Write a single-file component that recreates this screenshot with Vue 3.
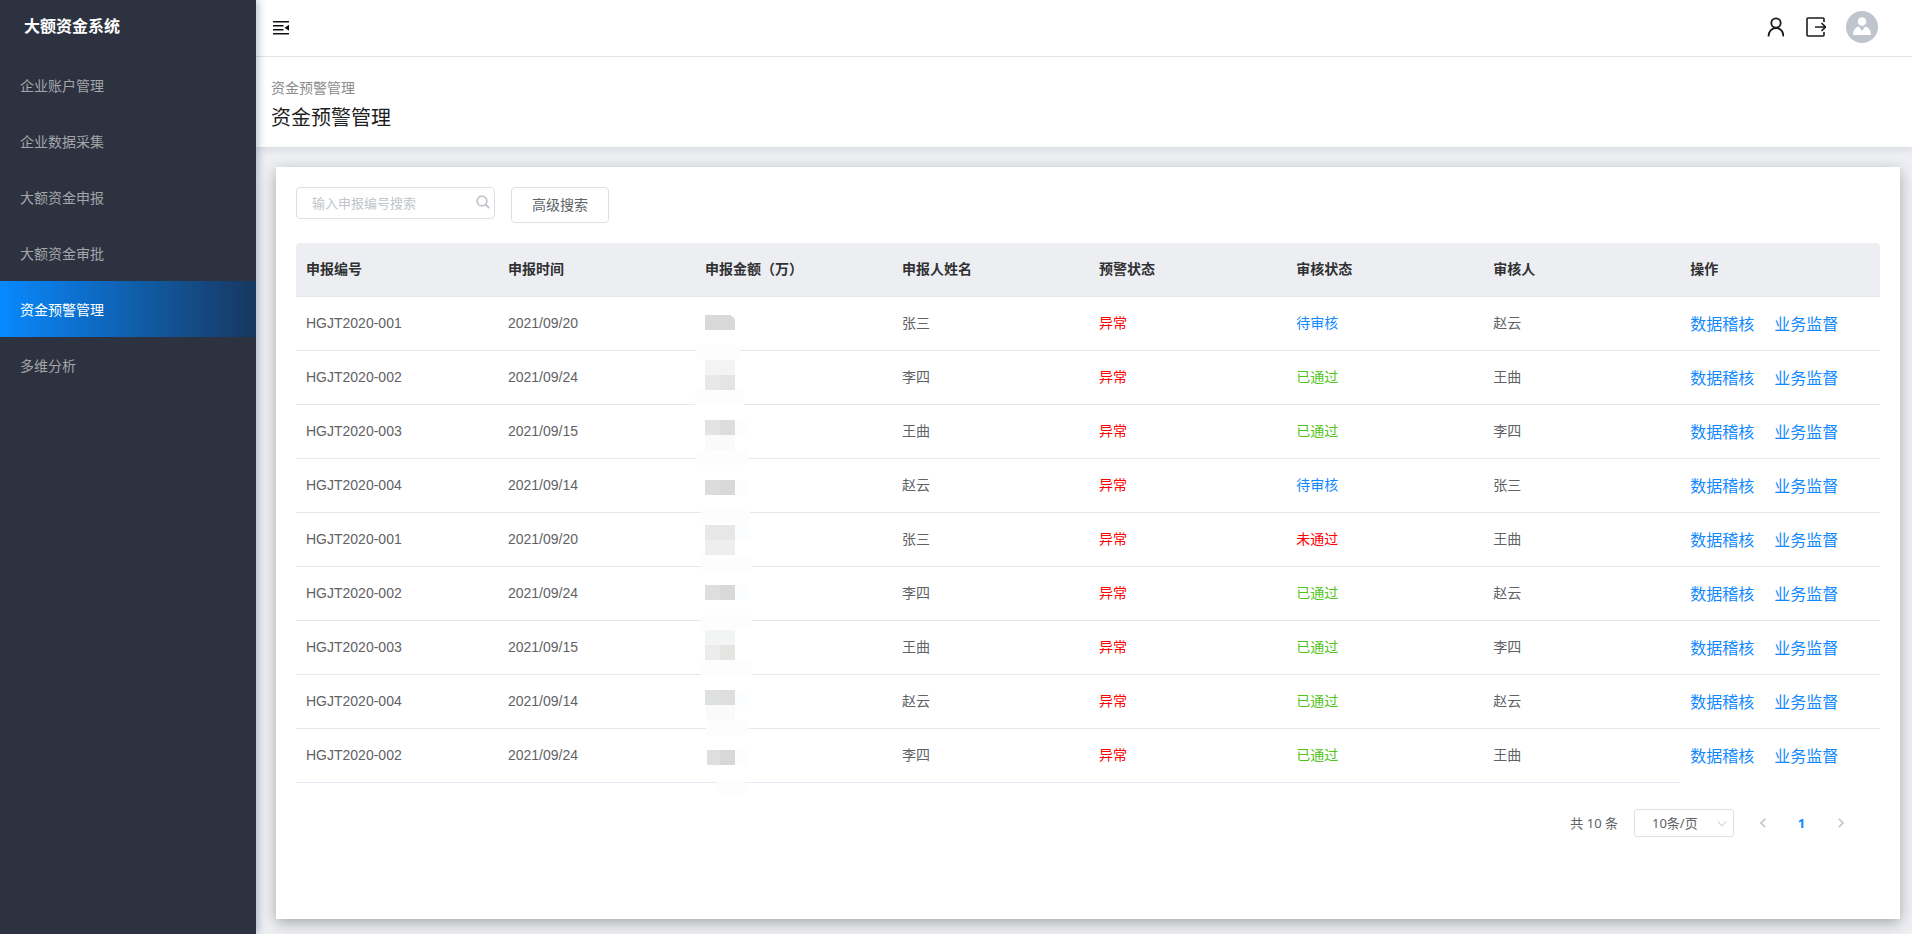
<script setup>
import { ref } from 'vue'

const menu = ['企业账户管理', '企业数据采集', '大额资金申报', '大额资金审批', '资金预警管理', '多维分析']
const active = ref(4)
const keyword = ref('')
const pageSize = ref('10条/页')

const columns = ['申报编号', '申报时间', '申报金额（万）', '申报人姓名', '预警状态', '审核状态', '审核人', '操作']

// mask: mosaic tiles that hide the amount, [x, y, width, height, fill, radius] inside the cell
const rows = [
  { id: 'HGJT2020-001', date: '2021/09/20', name: '张三', state: '待审核', auditor: '赵云',
    mask: [[10, 18, 26, 15, '#d9d9d9'], [36, 19, 1, 14, '#d9d9d9'], [37, 20, 2, 13, '#d9d9d9'], [39, 22, 1, 11, '#d9d9d9'], [1, 48, 44, 15, '#fdfdfd']] },
  { id: 'HGJT2020-002', date: '2021/09/24', name: '李四', state: '已通过', auditor: '王曲',
    mask: [[10, 9, 30, 15, '#f3f3f3'], [10, 24, 15, 15, '#e8e8e8'], [25, 24, 15, 15, '#e4e4e4'], [0, 39, 49, 15, '#fdfdfd']] },
  { id: 'HGJT2020-003', date: '2021/09/15', name: '王曲', state: '已通过', auditor: '李四',
    mask: [[10, 15, 15, 15, '#e3e3e3'], [25, 15, 15, 15, '#dddddd'], [40, 15, 11, 15, '#fbfdff'], [10, 30, 30, 15, '#fafafa'], [1, 45, 52, 15, '#fdfdfd']] },
  { id: 'HGJT2020-004', date: '2021/09/14', name: '赵云', state: '待审核', auditor: '张三',
    mask: [[10, 21, 15, 15, '#dcdcdc'], [25, 21, 15, 15, '#d8d8d8'], [40, 21, 13, 15, '#fbfdff'], [6, 51, 49, 14, '#fdfdfd']] },
  { id: 'HGJT2020-001', date: '2021/09/20', name: '张三', state: '未通过', auditor: '王曲',
    mask: [[10, 12, 30, 15, '#e7e7e7'], [40, 12, 15, 15, '#fbfdff'], [10, 27, 30, 15, '#eeeeee'], [6, 42, 51, 15, '#fdfdfd']] },
  { id: 'HGJT2020-002', date: '2021/09/24', name: '李四', state: '已通过', auditor: '赵云',
    mask: [[10, 18, 15, 15, '#dedede'], [25, 18, 15, 15, '#d8d8d8'], [40, 18, 15, 15, '#fbfdff'], [6, 48, 51, 15, '#fdfdfd']] },
  { id: 'HGJT2020-003', date: '2021/09/15', name: '王曲', state: '已通过', auditor: '李四',
    mask: [[10, 9, 30, 15, '#f3f4f4'], [10, 24, 15, 15, '#ececec'], [25, 24, 15, 15, '#e5e5e3'], [6, 39, 51, 15, '#fdfdfd']] },
  { id: 'HGJT2020-004', date: '2021/09/14', name: '赵云', state: '已通过', auditor: '赵云',
    mask: [[10, 15, 15, 15, '#dfe1e1'], [25, 15, 15, 15, '#dedede'], [40, 15, 15, 15, '#fbfdff'], [11, 30, 29, 15, '#fafafa'], [11, 45, 43, 15, '#fdfdfd']] },
  { id: 'HGJT2020-002', date: '2021/09/24', name: '李四', state: '已通过', auditor: '王曲',
    mask: [[12, 21, 13, 15, '#dedede'], [25, 21, 15, 15, '#d8d8d8'], [40, 21, 13, 15, '#fbfdff'], [20, 51, 31, 14, '#fdfdfd', 6]] },
]

const stateClass = { 待审核: 'pending', 已通过: 'passed', 未通过: 'failed' }
</script>

<template>
  <div class="layout">
    <aside class="sidebar">
      <div class="logo">大额资金系统</div>
      <nav>
        <a
          v-for="(item, i) in menu"
          :key="item"
          href="#"
          class="menu-item"
          :class="{ active: i === active }"
          @click.prevent="active = i"
        >{{ item }}</a>
      </nav>
    </aside>

    <div class="main">
      <header class="topbar">
        <button class="icon-btn" type="button" aria-label="收起菜单">
          <svg width="16" height="16" viewBox="0 0 16 16">
            <path d="M0 2.700h16M0 6.700h10.500M0 10.700h10.500M0 14.700h16" stroke="#111" stroke-width="1.500" fill="none" />
            <path d="M16 5.700v6l-4.500-3z" fill="#111" />
          </svg>
        </button>
        <div class="tools">
          <button class="icon-btn" type="button" aria-label="个人中心">
            <svg width="18" height="20" viewBox="-1 0 18 20" fill="none" stroke="#1c1c1c" stroke-width="1.800">
              <circle cx="9" cy="6" r="4.700" />
              <path d="M1.500 19.500c0-5 3.200-8.500 7.500-8.500s7.500 3.500 7.500 8.500" />
            </svg>
          </button>
          <button class="icon-btn" type="button" aria-label="退出登录">
            <svg width="22" height="20" viewBox="-1 0 22 20" fill="none" stroke="#1c1c1c" stroke-width="1.600">
              <path d="M19 5V2a1 1 0 0 0-1-1H3a1 1 0 0 0-1 1v16a1 1 0 0 0 1 1h15a1 1 0 0 0 1-1V15" />
              <path d="M10 10h10M16.500 6l4 4-4 4" />
            </svg>
          </button>
          <button class="icon-btn" type="button" aria-label="头像">
            <svg width="32" height="32" viewBox="0 0 32 32">
              <circle cx="16" cy="16" r="16" fill="#c0c4cc" />
              <circle cx="16" cy="10.500" r="4.300" fill="#fff" />
              <path d="M7 24c0-4.500 2-7.500 5.800-8.500l3.200 4.500 3.200-4.500c3.800 1 5.800 4 5.800 8.500z" fill="#fff" />
            </svg>
          </button>
        </div>
      </header>

      <section class="page-head">
        <div class="crumb">资金预警管理</div>
        <h1>资金预警管理</h1>
      </section>

      <main class="card">
        <form class="search" @submit.prevent>
          <div class="search-box">
            <input v-model="keyword" type="text" placeholder="输入申报编号搜索" aria-label="输入申报编号搜索" />
            <svg width="14" height="14" viewBox="0 0 14 14" fill="none" stroke="#c0c4cc" stroke-width="1.800">
              <circle cx="6" cy="6" r="4.800" />
              <path d="M9.500 9.500l3.700 3.700" />
            </svg>
          </div>
          <button class="advanced" type="button">高级搜索</button>
        </form>

        <table>
          <thead>
            <tr>
              <th v-for="c in columns" :key="c" scope="col">{{ c }}</th>
            </tr>
          </thead>
          <tbody>
            <tr v-for="(row, i) in rows" :key="i">
              <td>{{ row.id }}</td>
              <td>{{ row.date }}</td>
              <td class="amount">
                <svg width="60" height="54" viewBox="0 0 60 54" aria-hidden="true">
                  <rect v-for="(m, k) in row.mask" :key="k" :x="m[0]" :y="m[1]" :width="m[2]" :height="m[3]" :fill="m[4]" :rx="m[5] || 0" />
                </svg>
              </td>
              <td>{{ row.name }}</td>
              <td class="failed">异常</td>
              <td :class="stateClass[row.state]">{{ row.state }}</td>
              <td>{{ row.auditor }}</td>
              <td>
                <div class="ops">
                  <a href="#" @click.prevent>数据稽核</a>
                  <a href="#" @click.prevent>业务监督</a>
                </div>
              </td>
            </tr>
          </tbody>
        </table>

        <div class="pagination">
          <span>共 10 条</span>
          <div class="size">
            <select v-model="pageSize" aria-label="每页条数">
              <option>10条/页</option>
              <option>20条/页</option>
            </select>
            <svg width="10" height="6" viewBox="0 0 10 6" fill="none" stroke="#c0c4cc">
              <path d="M1 .5l4 4.500 4-4.500" />
            </svg>
          </div>
          <div class="pager">
            <button type="button" aria-label="上一页">
              <svg width="6" height="10" viewBox="0 0 6 10" fill="none" stroke="#c0c4cc" stroke-width="1.600"><path d="M5.300.7L1 5l4.300 4.300" /></svg>
            </button>
            <button type="button" class="current">1</button>
            <button type="button" aria-label="下一页">
              <svg width="6" height="10" viewBox="0 0 6 10" fill="none" stroke="#c0c4cc" stroke-width="1.600"><path d="M.7.7L5 5 .7 9.300" /></svg>
            </button>
          </div>
        </div>
      </main>
    </div>
  </div>
</template>

<style>
body {
  margin: 0;
  background: #eef0f4;
}
</style>

<style scoped>
.layout,
.layout * {
  box-sizing: border-box;
}
.layout {
  display: flex;
  min-height: 100vh;
  font: 14px/20px "Liberation Sans", "Noto Sans CJK SC", sans-serif;
  color: #606266;
}
button,
input,
select {
  font: inherit;
  color: inherit;
}
a {
  text-decoration: none;
}
svg {
  display: block;
}
.sidebar {
  position: relative;
  z-index: 2;
  flex: 0 0 256px;
  background: #2d3240;
  box-shadow: 2px 0 8px rgba(0, 41, 82, 0.3);
}
.logo {
  height: 57px;
  padding: 15px 24px;
  font-size: 16px;
  line-height: 24px;
  font-weight: 700;
  color: #fff;
}
.menu-item {
  display: block;
  height: 56px;
  padding: 2px 0 0 20px;
  line-height: 54px;
  color: #a3a5aa;
}
.menu-item.active {
  color: #fff;
  background: linear-gradient(90deg, #0889ff, #17375e);
}
.main {
  flex: 1;
  min-width: 0;
  display: flex;
  flex-direction: column;
}
.topbar {
  position: relative;
  z-index: 1;
  display: flex;
  align-items: center;
  justify-content: space-between;
  height: 57px;
  padding: 0 34px 2px 17px;
  background: #fff;
  border-bottom: 1px solid #e4e5e7;
}
.tools {
  display: flex;
  align-items: center;
  gap: 20px;
}
.icon-btn {
  padding: 0;
  border: 0;
  background: none;
}
.page-head {
  padding: 21px 15px 15px;
  background: #fff;
  box-shadow: 0 1px 10px rgba(0, 21, 41, 0.14);
}
.crumb {
  color: #8c8c8c;
}
h1 {
  margin: 6px 0 0;
  font-size: 20px;
  line-height: 28px;
  font-weight: 400;
  color: #1f1f1f;
}
.card {
  flex: 1;
  margin: 20px 12px 15px 20px;
  padding: 20px;
  background: #fff;
  box-shadow: 0 4px 14px rgba(0, 0, 0, 0.3);
}
.search {
  display: flex;
  align-items: flex-start;
  gap: 16px;
  margin-bottom: 20px;
}
.search-box {
  position: relative;
  width: 199px;
}
.search-box input {
  display: block;
  width: 100%;
  height: 32px;
  padding: 0 30px 0 15px;
  border: 1px solid #dcdfe6;
  border-radius: 4px;
  font-size: 13px;
  outline: none;
}
.search-box input::placeholder {
  color: #c0c4cc;
}
.search-box svg {
  position: absolute;
  right: 5px;
  top: 8px;
}
.advanced {
  height: 36px;
  padding: 0 20px;
  border: 1px solid #dcdfe6;
  border-radius: 4px;
  background: #fff;
}
table {
  width: 100%;
  table-layout: fixed;
  border-collapse: separate;
  border-spacing: 0;
}
th,
td {
  height: 54px;
  padding: 0 10px 2px;
  text-align: left;
  border-bottom: 1px solid #e8e8e8;
}
th {
  width: 12.44%;
  background: #edeef2;
  color: #303133;
  font-weight: 700;
}
th:first-child {
  width: 12.75%;
  border-top-left-radius: 4px;
}
th:last-child {
  width: auto;
  border-top-right-radius: 4px;
}
tr:last-child td {
  border-color: #e6ebf5;
}
thead tr:last-child th {
  border-color: #e8e8e8;
}
tr:last-child td:last-child {
  border-color: #fff;
}
.amount {
  position: relative;
}
.amount svg {
  position: absolute;
  left: 0;
  top: 0;
  overflow: visible;
}
.pending {
  color: #1088ff;
}
.passed {
  color: #52c41a;
}
.failed {
  color: #ff0000;
}
.ops {
  display: flex;
  gap: 20px;
  padding-top: 4px;
  font-size: 16px;
}
.ops a {
  color: #1088ff;
}
.pagination {
  display: flex;
  align-items: center;
  justify-content: flex-end;
  margin-top: 26px;
  padding-right: 20px;
  font-family: "Noto Sans", "Noto Sans CJK SC", sans-serif;
  font-size: 13px;
}
.size {
  position: relative;
  margin: 0 9px 0 16px;
}
.size select {
  display: block;
  width: 100px;
  height: 28px;
  padding: 0 0 0 17px;
  border: 1px solid #dcdfe6;
  border-radius: 3px;
  background: #fff;
  appearance: none;
}
.size svg {
  position: absolute;
  right: 7px;
  top: 12px;
}
.pager {
  display: flex;
}
.pager button {
  display: flex;
  align-items: center;
  justify-content: center;
  width: 39px;
  height: 28px;
  padding: 0;
  border: 0;
  background: none;
}
.pager .current {
  color: #1088ff;
  font-weight: 700;
}
</style>
